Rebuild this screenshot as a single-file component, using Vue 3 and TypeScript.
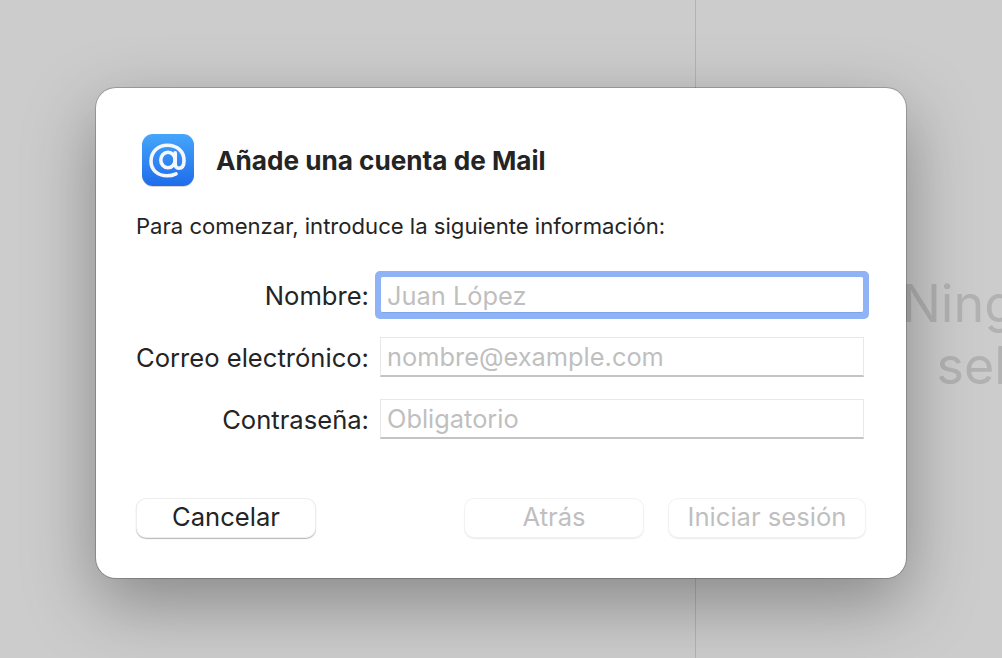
<script setup lang="ts">
interface Field {
  label: string
  placeholder: string
  focused?: boolean
}

const fields: Field[] = [
  { label: 'Nombre:', placeholder: 'Juan López', focused: true },
  { label: 'Correo electrónico:', placeholder: 'nombre@example.com' },
  { label: 'Contraseña:', placeholder: 'Obligatorio' },
]
</script>

<template>
  <div class="window">
    <div class="list-pane"></div>
    <div class="detail-pane">
      <p class="empty-text">Ningún mensaje<br />seleccionado</p>
    </div>

    <div class="dialog">
      <div class="dialog-head">
        <svg class="app-icon" width="53" height="54" viewBox="0 0 53 54">
          <defs>
            <linearGradient id="icon-bg" x1="0" y1="0" x2="0" y2="1">
              <stop offset="0" stop-color="#45a6fa" />
              <stop offset="1" stop-color="#1e6cea" />
            </linearGradient>
          </defs>
          <rect x="1" y="1" width="52" height="52" rx="11" fill="#000000" fill-opacity="0.16" />
          <rect x="1" y="0" width="52" height="52" rx="11" fill="url(#icon-bg)" />
          <g fill="none" stroke="#f4f8fe" stroke-width="3.6" stroke-linecap="round">
            <ellipse cx="27" cy="26" rx="7.2" ry="7.8" />
            <path d="M34.2 18.8V29.5Q34.2 34.2 37.8 34.2Q43 34.2 43 26.5C43 17 36 11.2 26.5 11.2C16.8 11.2 10 18 10 27C10 36 16.8 41.8 26 41.8Q31 41.8 35 39.8" />
          </g>
        </svg>
        <h1 class="title">Añade una cuenta de Mail</h1>
      </div>

      <p class="intro">Para comenzar, introduce la siguiente información:</p>

      <form class="form" @submit.prevent>
        <template v-for="field in fields" :key="field.label">
          <label class="field-label">{{ field.label }}</label>
          <div class="input" :class="{ focused: field.focused }">{{ field.placeholder }}</div>
        </template>
      </form>

      <div class="actions">
        <button class="btn cancel" type="button">Cancelar</button>
        <div class="actions-right">
          <button class="btn back" type="button" disabled>Atrás</button>
          <button class="btn login" type="button" disabled>Iniciar sesión</button>
        </div>
      </div>
    </div>
  </div>
</template>

<style>
html,
body {
  margin: 0;
  background: #cccccc;
}
</style>

<style scoped>
.window {
  position: relative;
  display: flex;
  width: 1002px;
  height: 658px;
  overflow: hidden;
  background: #cccccc;
  font-family: Inter, "Liberation Sans", sans-serif;
}

.list-pane {
  flex: none;
  width: 696px;
  border-right: 1px solid #b3b3b3;
  box-sizing: border-box;
}

.detail-pane {
  flex: none;
  width: 808px;
  padding-top: 273px;
}

.empty-text {
  margin: 0;
  text-align: center;
  font-size: 52px;
  line-height: 62px;
  color: #b2b2b2;
}

.dialog {
  position: absolute;
  left: 96px;
  top: 88px;
  width: 810px;
  height: 490px;
  box-sizing: border-box;
  padding: 46px 40px 0;
  background: #ffffff;
  border-radius: 20px;
  box-shadow: 0 0 0 1px rgba(0, 0, 0, 0.2), 0 24px 70px rgba(0, 0, 0, 0.34);
}

.dialog-head {
  display: flex;
  align-items: flex-start;
  padding-left: 5px;
  gap: 22px;
}

.app-icon {
  flex: none;
}

.title {
  margin: 0;
  font-size: 26.15px;
  line-height: 54px;
  font-weight: 700;
  color: #242424;
}

.intro {
  margin: 24px 0 0;
  font-size: 22.1px;
  line-height: 28px;
  color: #242424;
}

.form {
  display: grid;
  grid-template-columns: 233px 484px;
  column-gap: 11px;
  row-gap: 22px;
  align-items: center;
  margin-top: 35px;
}

.field-label {
  text-align: right;
  font-size: 25.6px;
  line-height: 32px;
  padding-top: 2px;
  color: #242424;
  white-space: nowrap;
  justify-self: end;
}

.input {
  box-sizing: border-box;
  height: 40px;
  padding: 0 6px;
  line-height: 38px;
  font-size: 25.4px;
  color: #bfbfbf;
  background: #ffffff;
  border: 1px solid #e8e8e8;
  border-bottom: 2px solid #c4c4c4;
}

.input.focused {
  border: 0;
  height: 36px;
  line-height: 38px;
  margin: 2px 1px;
  padding-left: 6px;
  box-shadow: inset 0 -1px 0 #7da3ea, 0 0 0 6px #8fb3f6;
  border-radius: 1.5px;
}

.actions {
  display: flex;
  justify-content: space-between;
  margin-top: 59px;
}

.actions-right {
  display: flex;
  gap: 24px;
}

.btn {
  box-sizing: border-box;
  height: 40px;
  width: 180px;
  padding: 0 0 3px;
  border: 0;
  border-radius: 10px;
  background: #ffffff;
  font-family: inherit;
  font-size: 25.6px;
  color: #242424;
  box-shadow: inset 0 0 0 1px rgba(0, 0, 0, 0.07), 0 1px 1px rgba(0, 0, 0, 0.28);
}

.btn:disabled {
  color: #bfbfbf;
  box-shadow: inset 0 0 0 1px rgba(0, 0, 0, 0.05), 0 1px 1px rgba(0, 0, 0, 0.08);
}

.btn.login {
  width: 198px;
}
</style>
